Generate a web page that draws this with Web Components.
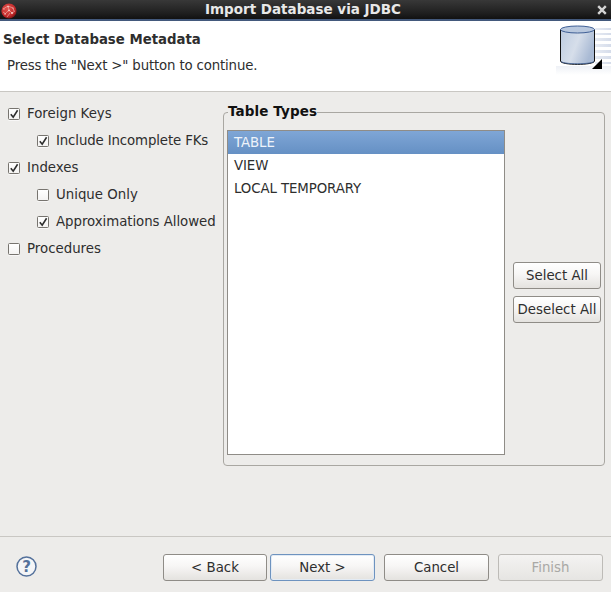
<!DOCTYPE html>
<html>
<head>
<meta charset="utf-8">
<title>Import Database via JDBC</title>
<style>
  html, body { margin: 0; padding: 0; height: 100%; background: #edecea; }
  body { font-family: "DejaVu Sans", sans-serif; font-size: 13.33px; color: #2e2e2e; overflow: hidden; }
</style>
</head>
<body>
<jdbc-wizard>
  <wizard-titlebar slot="titlebar">Import Database via JDBC</wizard-titlebar>
  <wizard-banner slot="banner" heading="Select Database Metadata" message='Press the "Next >" button to continue.'></wizard-banner>

  <div slot="options">
    <check-row checked>Foreign Keys</check-row>
    <check-row checked indent style="letter-spacing:-.13px">Include Incomplete FKs</check-row>
    <check-row checked>Indexes</check-row>
    <check-row indent>Unique Only</check-row>
    <check-row checked indent style="letter-spacing:-.05px">Approximations Allowed</check-row>
    <check-row>Procedures</check-row>
  </div>

  <table-types slot="types" items="TABLE,VIEW,LOCAL TEMPORARY"></table-types>

  <wizard-footer slot="footer"></wizard-footer>
</jdbc-wizard>

<script>
class JdbcWizard extends HTMLElement {
  constructor() {
    super();
    this.attachShadow({ mode: "open" });
    this.shadowRoot.innerHTML = `
      <style>
        :host { display: flex; flex-direction: column; width: 611px; height: 592px; }
        .body { flex: 1; display: flex; min-height: 0; padding: 8px 6px 0 6px; }
        .options { width: 217px; flex: none; }
        .types { flex: 1; min-width: 0; padding-top: 12px; }
      </style>
      <slot name="titlebar"></slot>
      <slot name="banner"></slot>
      <div class="body">
        <div class="options"><slot name="options"></slot></div>
        <div class="types"><slot name="types"></slot></div>
      </div>
      <slot name="footer"></slot>
    `;
  }
}

class WizardTitlebar extends HTMLElement {
  constructor() {
    super();
    this.attachShadow({ mode: "open" });
    this.shadowRoot.innerHTML = `
      <style>
        :host {
          display: flex; align-items: center; justify-content: space-between;
          height: 19px; padding: 0 4px 0 1px;
          background: linear-gradient(#383838, #1f1f1f 70%, #111);
          border-bottom: 2px solid #43597c;
          color: #e8e8e8; font-weight: bold; font-size: 13.5px;
        }
        .title { position: relative; top: -1px; left: -4px; }
        svg { display: block; flex: none; }
        .logo { margin-top: 3px; }
        .close { margin-top: 1px; }
      </style>
      <svg class="logo" width="16" height="16" viewBox="0 0 16 16">
        <defs>
          <radialGradient id="ball" cx=".4" cy=".35" r=".7">
            <stop offset="0" stop-color="#e2544e"/>
            <stop offset=".7" stop-color="#c2292a"/>
            <stop offset="1" stop-color="#6d1010"/>
          </radialGradient>
        </defs>
        <circle cx="8" cy="8" r="7.6" fill="url(#ball)"/>
        <path d="M2 6l5-3 5 2M4 11l4-4 3 3 3-2M6 14l3-4M2 9l3 2M12 5l1 3M7 3l1 4" fill="none" stroke="#eda59e" stroke-width=".7"/>
        <g fill="#f6cfca">
          <circle cx="7" cy="3.600" r=".8"/>
          <circle cx="8" cy="7.400" r=".9"/>
          <circle cx="11" cy="10" r="1"/>
          <circle cx="4" cy="11" r=".7"/>
          <circle cx="12" cy="5" r=".6"/>
          <circle cx="3" cy="6" r=".6"/>
        </g>
      </svg>
      <span class="title"><slot></slot></span>
      <svg class="close" width="10" height="10" viewBox="0 0 10 10">
        <path d="M1.2 1.2l7.6 7.6M8.8 1.2l-7.6 7.6" stroke="#d4d4d4" stroke-width="2.4"/>
      </svg>
    `;
  }
}

class WizardBanner extends HTMLElement {
  constructor() {
    super();
    this.attachShadow({ mode: "open" });
    this.shadowRoot.innerHTML = `
      <style>
        :host {
          display: flex; justify-content: space-between; height: 70px;
          background: #fff; border-bottom: 1px solid #c9c7c3;
        }
        .text { padding: 10px 0 0 3px; }
        h1 { margin: 0; font-size: 13.3px; line-height: 18px; font-weight: bold; color: #2e2e2e; }
        p { margin: 9px 0 0 4px; line-height: 16px; color: #2e2e2e; letter-spacing: -.16px; }
        svg { display: block; flex: none; }
      </style>
      <div class="text">
        <h1></h1>
        <p></p>
      </div>
      <svg width="70" height="70" viewBox="0 0 70 70">
        <defs>
          <linearGradient id="can" x1="0" x2="1" y1="0" y2=".4">
            <stop offset="0" stop-color="#bccbe0"/>
            <stop offset=".55" stop-color="#d6deea"/>
            <stop offset="1" stop-color="#a9bad4"/>
          </linearGradient>
          <linearGradient id="fadeY" x1="0" x2="0" y1="0" y2="1">
            <stop offset="0" stop-color="#eef1f6"/>
            <stop offset="1" stop-color="#eef1f6" stop-opacity="0"/>
          </linearGradient>
          <linearGradient id="stripe" x1="0" x2="1" y1="0" y2="0">
            <stop offset="0" stop-color="#d5dcea" stop-opacity=".55"/>
            <stop offset="1" stop-color="#d5dcea"/>
          </linearGradient>
        </defs>
        <g fill="url(#stripe)">
          <rect x="54" y="7" width="16" height="2"/>
          <rect x="54" y="12" width="16" height="2"/>
          <rect x="54" y="17" width="16" height="3"/>
          <rect x="54" y="23" width="16" height="3"/>
          <rect x="54" y="29" width="16" height="3"/>
          <rect x="54" y="35" width="16" height="3"/>
          <rect x="54" y="41" width="16" height="2"/>
        </g>
        <rect x="15" y="45" width="55" height="9" fill="url(#fadeY)"/>
        <path d="M19.5 8.5v31.500c0 4.500 34 4.500 34 0V8.500z" fill="url(#can)" stroke="#111" stroke-width="1"/>
        <ellipse cx="36.500" cy="8.500" rx="17" ry="3.500" fill="#b9c8de" stroke="#3f5f95" stroke-width="1"/>
        <path d="M20 40.500c3 3 30 3 33 0" fill="none" stroke="#3f5f95" stroke-width=".8"/>
        <path d="M51 48l10-10v10z" fill="#000"/>
      </svg>
    `;
  }
  connectedCallback() {
    this.shadowRoot.querySelector("h1").textContent = this.getAttribute("heading") || "";
    this.shadowRoot.querySelector("p").textContent = this.getAttribute("message") || "";
  }
}

class CheckRow extends HTMLElement {
  constructor() {
    super();
    this.attachShadow({ mode: "open" });
    this.shadowRoot.innerHTML = `
      <style>
        :host { display: flex; align-items: center; height: 27px; gap: 7px; padding-left: 2px; white-space: nowrap; }
        :host([indent]) { padding-left: 31px; }
        .box {
          width: 10px; height: 10px; flex: none; background: linear-gradient(#fff, #f4f3f2);
          border: 1px solid #77746f; border-radius: 1.5px;
          box-shadow: 0 1px 0 rgba(255,255,255,.6);
        }
        svg { display: none; width: 10px; height: 10px; }
        :host([checked]) svg { display: block; }
      </style>
      <span class="box"><svg viewBox="0 0 10 10"><path d="M1.8 5.2l2.4 3 4.4-7" fill="none" stroke="#2e2e2e" stroke-width="1.6"/></svg></span>
      <span><slot></slot></span>
    `;
  }
}

class PushButton extends HTMLElement {
  constructor() {
    super();
    this.attachShadow({ mode: "open" });
    this.shadowRoot.innerHTML = `
      <style>
        :host {
          display: flex; align-items: center; justify-content: center; box-sizing: border-box;
          width: 105px; height: 27px; border: 1px solid #8f8c87; border-radius: 3px;
          background: linear-gradient(#fff, #f7f6f5 45%, #e4e2df);
          color: #2e2e2e; white-space: nowrap;
        }
        :host([focused]) { border-color: #6e93bf; box-shadow: inset 0 0 0 1px #e3ebf4; }
        :host([disabled]) { border-color: #bdbbb7; color: #a9a8a5; background: linear-gradient(#f4f3f2, #e6e5e2); }
      </style>
      <slot></slot>
    `;
  }
}

class TableTypes extends HTMLElement {
  constructor() {
    super();
    this.attachShadow({ mode: "open" });
    this.shadowRoot.innerHTML = `
      <style>
        :host { display: block; height: 363px; }
        fieldset {
          box-sizing: border-box; height: 100%; margin: -9px 0 0 0; padding: 9px 3px 10px 3px;
          border: 1px solid #a9a7a2; border-radius: 4px;
          display: flex; gap: 8px;
        }
        legend {
          padding: 0; margin-left: 1px; font-weight: bold; font-size: 13.5px; color: #111; line-height: 18px; letter-spacing: .1px;
          position: relative; top: -1px;
        }
        .list {
          box-sizing: border-box; width: 278px; flex: none; background: #fff;
          border: 1px solid #8f8c87;
        }
        .row { height: 23px; line-height: 23px; padding-left: 6px; color: #2e2e2e; letter-spacing: -.1px; }
        .row.sel { background: linear-gradient(#7fa6d6, #6590c4); color: #eef3fa; }
        .side {
          flex: 1; display: flex; flex-direction: column; justify-content: center; gap: 7px;
        }
        push-button { width: 88px; }
      </style>
      <fieldset>
        <legend>Table Types</legend>
        <div class="list"></div>
        <div class="side">
          <push-button>Select All</push-button>
          <push-button>Deselect All</push-button>
        </div>
      </fieldset>
    `;
  }
  connectedCallback() {
    const list = this.shadowRoot.querySelector(".list");
    (this.getAttribute("items") || "").split(",").forEach((name, i) => {
      const row = document.createElement("div");
      row.className = i === 0 ? "row sel" : "row";
      row.textContent = name;
      list.appendChild(row);
    });
  }
}

class WizardFooter extends HTMLElement {
  constructor() {
    super();
    this.attachShadow({ mode: "open" });
    this.shadowRoot.innerHTML = `
      <style>
        :host {
          display: flex; align-items: center; height: 49px; padding: 6px 8px 0 16px;
          border-top: 1px solid #c9c7c3;
        }
        svg { display: block; flex: none; margin-top: -3px; }
        .buttons { margin-left: auto; display: flex; }
        #back { width: 104px; }
        #next { margin: 0 9px 0 3px; }
        #finish { margin-left: 9px; }
      </style>
      <svg width="21" height="21" viewBox="0 0 21 21">
        <circle cx="10.5" cy="10.5" r="9.5" fill="#f4f5f7" stroke="#54719b" stroke-width="1.5"/>
        <text x="10.5" y="15.5" text-anchor="middle" font-family="DejaVu Sans" font-weight="bold" font-size="15" fill="#54719b">?</text>
      </svg>
      <div class="buttons">
        <push-button id="back">&lt; Back</push-button>
        <push-button id="next" focused>Next &gt;</push-button>
        <push-button>Cancel</push-button>
        <push-button id="finish" disabled>Finish</push-button>
      </div>
    `;
  }
}

customElements.define("jdbc-wizard", JdbcWizard);
customElements.define("wizard-titlebar", WizardTitlebar);
customElements.define("wizard-banner", WizardBanner);
customElements.define("check-row", CheckRow);
customElements.define("push-button", PushButton);
customElements.define("table-types", TableTypes);
customElements.define("wizard-footer", WizardFooter);
</script>
</body>
</html>
